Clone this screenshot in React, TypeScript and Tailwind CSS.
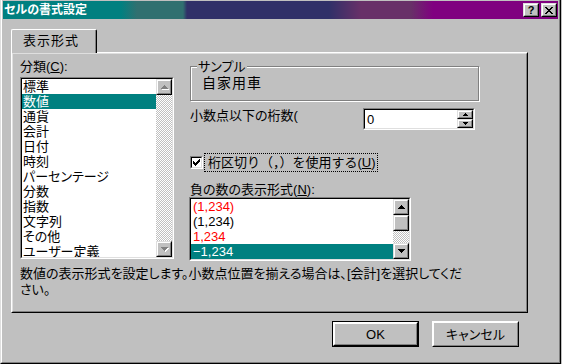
import type { ReactNode } from "react";

const categories = [
  "標準",
  "数値",
  "通貨",
  "会計",
  "日付",
  "時刻",
  "パーセンテージ",
  "分数",
  "指数",
  "文字列",
  "その他",
  "ユーザー定義",
];

const negatives = [
  { label: "(1,234)", red: true, selected: false },
  { label: "(1,234)", red: false, selected: false },
  { label: "1,234", red: true, selected: false },
  { label: "−1,234", red: false, selected: true },
];

const closeGlyph = ["XX....XX", ".XX..XX.", "..XXXX..", "...XX...", "..XXXX..", ".XX..XX.", "XX....XX"];
const checkGlyph = ["......X", ".....XX", "X...XXX", "XX.XXX.", "XXXXX..", ".XXX...", "..X...."];
const upGlyph = ["...X...", "..XXX..", ".XXXXX.", "XXXXXXX"];
const downGlyph = ["XXXXXXX", ".XXXXX.", "..XXX..", "...X..."];
const smallUp = ["..X..", ".XXX.", "XXXXX"];
const smallDown = ["XXXXX", ".XXX.", "..X.."];

function Bitmap({ rows, color, className = "" }: { rows: string[]; color: string; className?: string }) {
  return (
    <svg width={rows[0].length} height={rows.length} shapeRendering="crispEdges" className={`block ${className}`}>
      {rows.flatMap((r, y) =>
        [...r].map((c, x) =>
          c === "X" ? <rect key={`${x}-${y}`} x={x} y={y} width={1} height={1} fill={color} /> : null
        )
      )}
    </svg>
  );
}

function Raised({ className = "", children }: { className?: string; children?: ReactNode }) {
  return (
    <div className={`shrink-0 border border-t-[#dfdfdf] border-l-[#dfdfdf] border-r-black border-b-black ${className}`}>
      <div className="h-full border border-t-white border-l-white border-r-[#808080] border-b-[#808080] bg-[#c0c0c0] flex items-center justify-center">
        {children}
      </div>
    </div>
  );
}

function Sunken({ className = "", children }: { className?: string; children?: ReactNode }) {
  return (
    <div className={`shrink-0 border border-t-[#808080] border-l-[#808080] border-r-white border-b-white ${className}`}>
      <div className="h-full border border-t-black border-l-black border-r-[#dfdfdf] border-b-[#dfdfdf] bg-white flex overflow-hidden">
        {children}
      </div>
    </div>
  );
}

function DisabledArrow({ rows }: { rows: string[] }) {
  return (
    <div className="relative">
      <Bitmap rows={rows} color="#ffffff" className="absolute left-[1px] top-[1px]" />
      <Bitmap rows={rows} color="#808080" className="relative" />
    </div>
  );
}

const dither =
  "bg-[image:repeating-conic-gradient(#ffffff_0_25%,#c0c0c0_0_50%)] bg-[length:2px_2px]";

export default function App() {
  return (
    <div className="w-[562px] h-[364px] bg-[#c0c0c0] overflow-hidden font-['Liberation_Sans','Noto_Sans_CJK_JP',sans-serif] text-[13px] leading-[15px] text-black [font-feature-settings:'palt']">
      <div className="w-[561px] h-[364px] border-l border-r border-b border-l-[#dfdfdf] border-r-black border-b-black">
        <div className="h-full border-l border-r border-b border-l-white border-r-[#808080] border-b-[#808080] pt-[1px] px-[1px] flex flex-col">
          {/* title bar */}
          <div className="h-[18px] shrink-0 flex items-center pl-[1px] pr-[1px] bg-[linear-gradient(90deg,#008080_0,#008080_118px,#307070_134px,#307070_180px,#303068_184px,#303068_326px,#683068_358px,#683068_408px,#800080_430px,#800080_100%)]">
            <span className="text-white font-bold text-[12px] leading-[14px]">セルの書式設定</span>
            <div className="ml-auto flex gap-[2px]">
              <Raised className="w-[16px] h-[14px]">
                <span className="font-bold text-[11px] leading-[10px] font-['Liberation_Sans',sans-serif]">?</span>
              </Raised>
              <Raised className="w-[16px] h-[14px]">
                <Bitmap rows={closeGlyph} color="#000000" />
              </Raised>
            </div>
          </div>

          {/* body */}
          <div className="pl-[8px] pt-[10px]">
            {/* tab */}
            <div className="relative z-10 w-[86px] h-[24px] rounded-tl-[2px] rounded-tr-[2px] border-t border-l border-r border-t-white border-l-white border-r-black bg-[#c0c0c0]">
              <div className="h-full border-r border-r-[#808080] pl-[11px] pt-[3px] tracking-[1px]">表示形式</div>
            </div>

            {/* panel */}
            <div className="w-[517px] h-[261px] -mt-[1px] border border-t-white border-l-white border-r-black border-b-black">
              <div className="h-full border border-t-[#dfdfdf] border-l-[#dfdfdf] border-r-[#808080] border-b-[#808080] pl-[7px] pt-[5px]">
                <div className="flex items-start">
                  {/* category list */}
                  <div className="w-[154px]">
                    <div>
                      分類(<u>C</u>):
                    </div>
                    <Sunken className="mt-[3px] w-[154px] h-[182px]">
                      <div className="flex-1 min-w-0">
                        {categories.map((c) => (
                          <div
                            key={c}
                            className={`h-[15px] pl-[1px] whitespace-nowrap ${c === "数値" ? "bg-[#008080] text-white" : ""}`}
                          >
                            {c}
                          </div>
                        ))}
                      </div>
                      <div className="w-[16px] h-full flex flex-col">
                        <Raised className="w-[16px] h-[16px]">
                          <DisabledArrow rows={upGlyph} />
                        </Raised>
                        <div className={`flex-1 ${dither}`} />
                        <Raised className="w-[16px] h-[16px]">
                          <DisabledArrow rows={downGlyph} />
                        </Raised>
                      </div>
                    </Sunken>
                  </div>

                  {/* right column */}
                  <div className="ml-[16px] w-[290px]">
                    <div className="relative mt-[7px] w-[289px] h-[35px] border border-[#808080] shadow-[inset_1px_1px_0_#ffffff,1px_1px_0_#ffffff] pl-[11px] pt-[9px]">
                      <span className="absolute -top-[8px] left-[6px] px-[1px] bg-[#c0c0c0]">サンプル</span>
                      <div className="text-[14px] leading-[15px] tracking-[1px]">自家用車</div>
                    </div>

                    <div className="mt-[7px] flex items-start">
                      <div className="w-[173px] whitespace-nowrap">小数点以下の桁数(</div>
                      <Sunken className="w-[112px] h-[22px]">
                        <div className="flex-1 pl-[2px] pt-[2px]">0</div>
                        <div className="w-[16px] flex flex-col">
                          <Raised className="w-[16px] h-[9px]">
                            <Bitmap rows={smallUp} color="#000000" />
                          </Raised>
                          <Raised className="w-[16px] h-[9px]">
                            <Bitmap rows={smallDown} color="#000000" />
                          </Raised>
                        </div>
                      </Sunken>
                    </div>

                    <div className="mt-[23px] flex items-center">
                      <Sunken className="w-[13px] h-[13px]">
                        <div className="flex-1 flex items-center justify-center">
                          <Bitmap rows={checkGlyph} color="#000000" />
                        </div>
                      </Sunken>
                      <div className="ml-[1px] border border-dotted border-black pl-[3px] pr-[1px] py-[1px] whitespace-nowrap [font-feature-settings:normal]">
                        桁区切り（，）を使用する(<u>U</u>)
                      </div>
                    </div>

                    <div className="mt-[10px]">
                      負の数の表示形式(<u>N</u>):
                    </div>
                    <Sunken className="-ml-[1px] w-[222px] h-[64px]">
                      <div className="flex-1 min-w-0">
                        {negatives.map((n, i) => (
                          <div
                            key={i}
                            className={`h-[15px] pl-[2px] whitespace-nowrap ${
                              n.selected ? "bg-[#008080] text-white" : n.red ? "text-[#ff0000]" : ""
                            }`}
                          >
                            {n.label}
                          </div>
                        ))}
                      </div>
                      <div className="w-[16px] h-full flex flex-col">
                        <Raised className="w-[16px] h-[16px]">
                          <Bitmap rows={upGlyph} color="#000000" />
                        </Raised>
                        <Raised className="w-[16px] h-[16px]" />
                        <div className={`flex-1 ${dither}`} />
                        <Raised className="w-[16px] h-[16px]">
                          <Bitmap rows={downGlyph} color="#000000" />
                        </Raised>
                      </div>
                    </Sunken>
                  </div>
                </div>

                <div className="mt-[5px] leading-[16px] whitespace-nowrap">
                  数値の表示形式を設定します。小数点位置を揃える場合は、[会計]を選択してくだ
                  <br />
                  さい。
                </div>
              </div>
            </div>

            {/* buttons */}
            <div className="w-[517px] mt-[8px] flex justify-end gap-[13px] pr-[9px]">
              <div className="w-[87px] h-[26px] border border-black">
                <Raised className="w-full h-full border-t-white border-l-white">
                  <span>OK</span>
                </Raised>
              </div>
              <Raised className="w-[87px] h-[26px] border-t-white border-l-white">
                <span>キャンセル</span>
              </Raised>
            </div>
          </div>
        </div>
      </div>
    </div>
  );
}
